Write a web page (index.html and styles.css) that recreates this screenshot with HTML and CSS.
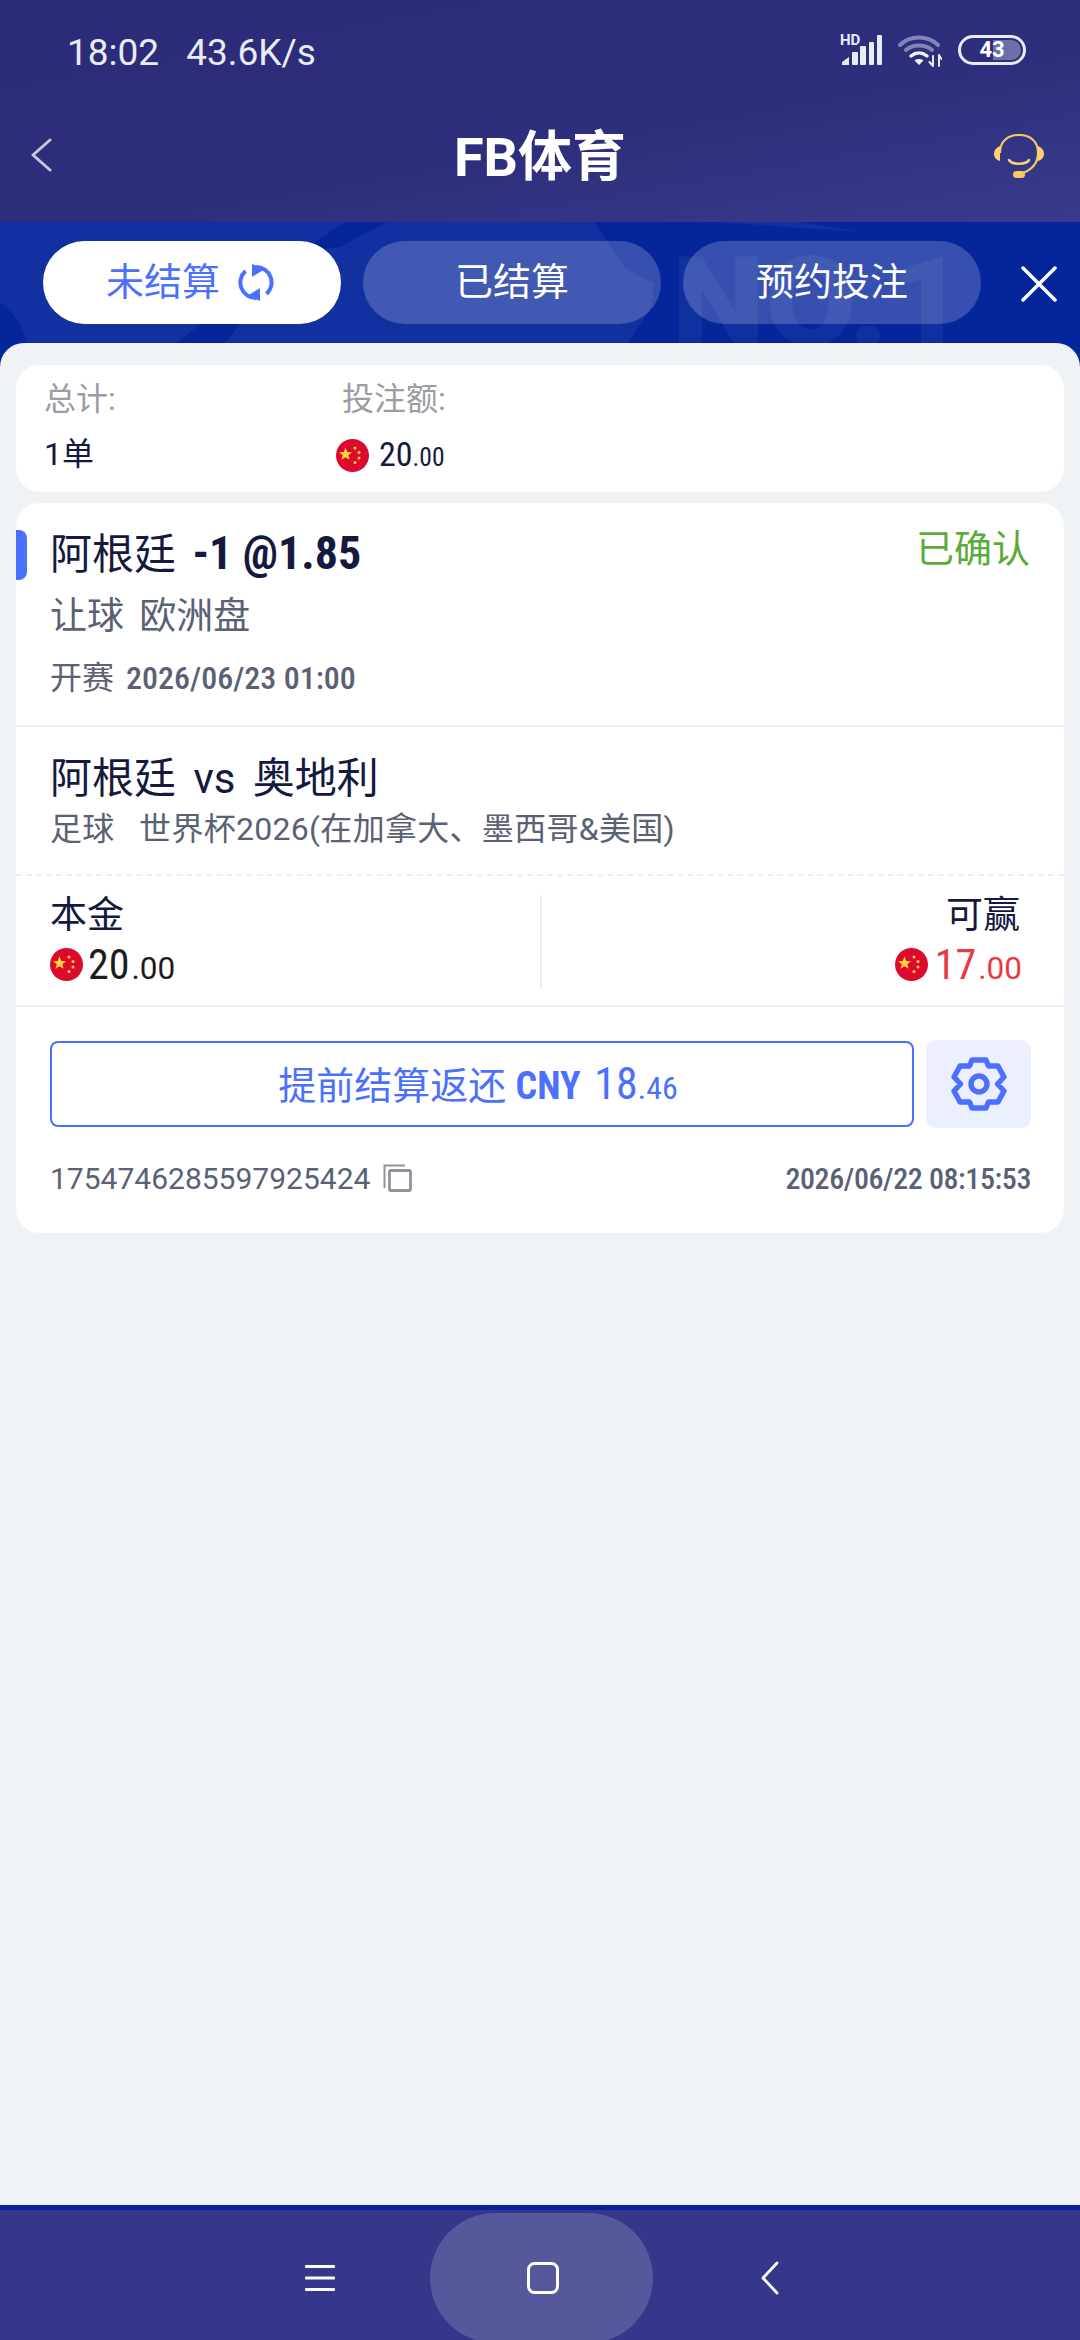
FILE: index.html

```html
<!DOCTYPE html>
<html lang="zh">
<head>
  <meta charset="UTF-8">
  <meta name="viewport" content="width=device-width, initial-scale=1.0"/>
  <title>FB体育</title>
  <link rel="stylesheet" href="styles.css">
</head>
<body>
  <svg class="defs" width="0" height="0">
    <symbol id="cn" viewBox="0 0 33 33">
      <circle cx="16.5" cy="16.5" r="16.5" fill="#dc0a2d"/>
      <polygon fill="#ffd23c" points="9.5,8.5 11.3,13 16,13.2 12.4,16.2 13.6,20.8 9.5,18.2 5.5,20.8 6.7,16.2 3,13.2 7.7,13"/>
      <circle cx="19" cy="9" r="1.5" fill="#ffd23c"/>
      <circle cx="23" cy="13.5" r="1.5" fill="#ffd23c"/>
      <circle cx="23" cy="19" r="1.5" fill="#ffd23c"/>
      <circle cx="19" cy="23.5" r="1.5" fill="#ffd23c"/>
    </symbol>
  </svg>

  <div class="screen">
    <div class="top">
      <div class="statusbar">
        <div class="status-left"><span>18:02</span><span>43.6K/s</span></div>
        <div class="status-right">
          <div class="signal">
            <span class="hd">HD</span>
            <svg width="40" height="30" viewBox="0 0 40 30" fill="#e9ebf3">
              <path d="M0 30v-3l7-5v8z"/>
              <rect x="10" y="17" width="6" height="13" rx="1"/>
              <rect x="18" y="11" width="6" height="19" rx="1"/>
              <rect x="27" y="7" width="5" height="23" rx="1"/>
              <rect x="35" y="0" width="5" height="30" rx="1"/>
            </svg>
          </div>
          <svg class="wifi" width="44" height="32" viewBox="0 0 44 32" fill="none" stroke-linecap="round">
            <path d="M2 10C12 0 30 0 40 10" stroke="#8184b5" stroke-width="4"/>
            <path d="M8 15C15 9 27 9 34 15" stroke="#8184b5" stroke-width="4"/>
            <path d="M13 21C18 17 24 17 29 21" stroke="#f1f2f8" stroke-width="3.5"/>
            <path d="M16.5 25.5L21 30l4.5-4.5C23 23.5 19 23.5 16.5 25.5z" fill="#f1f2f8"/>
            <path d="M35 21v10M35 31l-3.5-4M41 20v11M41 20l2.5 4" stroke="#e9ebf3" stroke-width="2"/>
          </svg>
          <div class="battery"><span class="battery-fill"></span><span class="battery-num">43</span></div>
        </div>
      </div>
      <div class="header">
        <svg class="back" width="22" height="34" viewBox="0 0 22 34" fill="none" stroke="#c8c9d8" stroke-width="3" stroke-linecap="round" stroke-linejoin="round"><path d="M20 2L3 17l17 15"/></svg>
        <h1>FB体育</h1>
        <svg class="headset" width="50" height="44" viewBox="0 0 50 44" fill="none">
          <path d="M6 19C6 7 14 1 25 1s19 6 19 18c0 9-5 16-15 20" stroke="#f5c766" stroke-width="2.2"/>
          <path d="M6 12v15C2 26 0 23 0 19.5S2 14 6 12zM44 12v15c4-1 6-4 6-7.5S48 14 44 12z" fill="#fcd273"/>
          <path d="M15 26c3 5 17 5 20 0" stroke="#fcd273" stroke-width="2.5" stroke-linecap="round"/>
          <rect x="19" y="37" width="12" height="7" rx="3.5" fill="#fcc660"/>
        </svg>
      </div>
    </div>

    <div class="tabs">
      <svg class="tabs-bg" width="1080" height="121" viewBox="0 0 1080 121">
        <path d="M0 0H595Q609 23 623 43Q635 55 654 60L651 86L628 121H0z" fill="#12309f"/>
        <path d="M300 30L345 0H387L340 25z" fill="#05259b"/>
        <path d="M177 121L215 90H250L225 121z" fill="#05259b"/>
        <path d="M0 80Q20 95 27 121H0z" fill="#05259b"/>
        <path d="M717 0L860 10L800 0z" fill="#12309f"/>
      </svg>
      <span class="tabs-mark">NO.1</span>
      <div class="tab tab-active">
        未结算
        <svg class="refresh" width="36" height="37" viewBox="0 0 36 37" fill="none" stroke="#4b70ff" stroke-width="4">
          <path d="M7.5 7A15.5 15.5 0 0 0 18 34"/>
          <path d="M28.5 30A15.5 15.5 0 0 0 18 3"/>
          <path d="M22 24V37L9 32zM14 13V0L27 5z" fill="#4b70ff" stroke="none"/>
        </svg>
      </div>
      <div class="tab">已结算</div>
      <div class="tab">预约投注</div>
      <svg class="close" width="36" height="36" viewBox="0 0 36 36" stroke="#fff" stroke-width="3.5" stroke-linecap="round"><path d="M2 2l32 32M34 2L2 34"/></svg>
    </div>

    <div class="sheet">
      <div class="summary">
        <div class="summary-col">
          <div class="summary-label">总计:</div>
          <div class="summary-value">1单</div>
        </div>
        <div class="summary-col">
          <div class="summary-label">投注额:</div>
          <div class="summary-value summary-money">
            <svg class="flag"><use href="#cn"/></svg>
            <span class="num n-34">20<small>.00</small></span>
          </div>
        </div>
      </div>

      <div class="bet">
        <div class="bet-head">
          <div class="bet-row">
            <div class="bet-title">阿根廷 <b class="num bet-odds">-1 @1.85</b></div>
            <div class="bet-state">已确认</div>
          </div>
          <div class="bet-type">让球 欧洲盘</div>
          <div class="bet-start">开赛 <span class="num">2026/06/23 01:00</span></div>
        </div>

        <div class="bet-match">
          <div class="match-name">阿根廷 vs 奥地利</div>
          <div class="match-league">足球&nbsp;&nbsp;世界杯2026(在加拿大、墨西哥&amp;美国)</div>
        </div>

        <div class="bet-amounts">
          <div class="amount">
            <div class="amount-label">本金</div>
            <div class="amount-value">
              <svg class="flag"><use href="#cn"/></svg>
              <span class="num n-big">20<small>.00</small></span>
            </div>
          </div>
          <div class="amount amount-win">
            <div class="amount-label">可赢</div>
            <div class="amount-value">
              <svg class="flag"><use href="#cn"/></svg>
              <span class="num n-big">17<small>.00</small></span>
            </div>
          </div>
        </div>

        <div class="bet-foot">
          <div class="actions">
            <div class="cashout">提前结算返还 <span class="num n-cash"><b>CNY</b> <em>18</em><small>.46</small></span></div>
            <div class="gear">
              <svg width="56" height="56" viewBox="-3 -3 56 56" fill="none" stroke="#4b70ff" stroke-width="5.4" stroke-linejoin="round">
                <path d="M18 1H32L34.5 7H44L50 18L43.5 25L50 32L44 43H34.5L32 49H18L15.5 43H6L0 32L6.5 25L0 18L6 7H15.5Z"/>
                <circle cx="25" cy="25" r="8"/>
              </svg>
            </div>
          </div>
          <div class="meta">
            <div class="order">1754746285597925424
              <svg width="30" height="28" viewBox="0 0 30 28" fill="none" stroke="#8f939c"><path d="M1.5 24V1.5H22" stroke-width="2"/><rect x="6.5" y="6.5" width="21" height="20" rx="1.5" stroke-width="2.8"/></svg>
            </div>
            <div class="num order-time">2026/06/22 08:15:53</div>
          </div>
        </div>
      </div>
    </div>

    <div class="navbar">
      <div class="nav-home"></div>
      <svg class="nav-menu" width="30" height="28" viewBox="0 0 30 28" fill="#fff"><rect y="1" width="30" height="3" rx="1"/><rect y="12.5" width="30" height="3" rx="1"/><rect y="24" width="30" height="3" rx="1"/></svg>
      <svg class="nav-square" width="32" height="32" viewBox="0 0 32 32" fill="none" stroke="#fff" stroke-width="3"><rect x="1.5" y="1.5" width="29" height="29" rx="6"/></svg>
      <svg class="nav-back" width="18" height="34" viewBox="0 0 18 34" fill="none" stroke="#fff" stroke-width="2.8" stroke-linecap="round" stroke-linejoin="round"><path d="M16 2L2 17l14 15"/></svg>
    </div>
  </div>
</body>
</html>
```

FILE: styles.css

```css
* { box-sizing: border-box; }
html, body { margin: 0; padding: 0; }
body { font-family: Roboto, "Noto Sans CJK SC", sans-serif; background: #eff3f6; color: #14193f; }
.defs { position: absolute; }
.screen { width: 1080px; height: 2340px; display: flex; flex-direction: column; overflow: hidden; }

.top { height: 222px; background: linear-gradient(170deg, #2b2a78 0%, #2e2f7c 60%, #383b8d 100%); color: #fff; }
.statusbar { height: 76px; padding: 29px 54px 0 67px; display: flex; justify-content: space-between; align-items: flex-start; }
.status-left { display: flex; gap: 27px; font-size: 37px; line-height: 48px; color: #e9ebf3; }
.status-right { display: flex; gap: 16px; margin-top: 6px; align-items: flex-start; }
.signal { position: relative; width: 40px; height: 30px; }
.hd { position: absolute; left: -2px; top: -2px; font-size: 15px; line-height: 14px; font-weight: 700; color: #e9ebf3; }
.battery { position: relative; width: 68px; height: 30px; border: 3px solid #e9ebf3; border-radius: 15px; text-align: center; }
.battery-fill { position: absolute; right: 2px; top: 2px; bottom: 2px; width: 28px; border-radius: 0 10px 10px 0; background: #6d6eaa; }
.battery-num { position: relative; font-size: 22px; line-height: 24px; font-weight: 700; display: block; }

.header { height: 146px; position: relative; display: flex; align-items: center; justify-content: center; padding-top: 17px; }
.header h1 { margin: 0; font-size: 54px; line-height: 64px; font-weight: 700; color: #fff; }
.back { position: absolute; left: 30px; top: 62px; }
.headset { position: absolute; right: 36px; top: 58px; }

.tabs { position: relative; height: 145px; background: #05259b; padding: 19px 0 24px 43px; margin-bottom: -24px; display: flex; gap: 22px; overflow: hidden; }
.tabs-bg { position: absolute; left: 0; top: 0; }
.tabs-mark { position: absolute; left: 672px; top: 16px; font-size: 125px; line-height: 130px; font-weight: 900; color: rgba(255,255,255,0.05); transform: scaleX(1.06); transform-origin: left; }
.tab { position: relative; width: 298px; height: 83px; border-radius: 42px; background: rgba(255,255,255,0.2); color: #fff; font-size: 38px; line-height: 83px; display: flex; align-items: center; justify-content: center; gap: 18px; }
.tab-active { background: #fff; color: #4b70ff; padding-right: 4px; }
.close { position: absolute; left: 1021px; top: 44px; }

.sheet { position: relative; flex: 1; background: #eff3f6; border-radius: 24px 24px 0 0; padding: 22px 16px 0; }
.summary { height: 127px; background: #fff; border-radius: 24px; padding: 14px 0 0 28px; display: flex; }
.summary-col { width: 298px; }
.summary-label { font-size: 32px; line-height: 40px; color: #9a9da3; }
.summary-value { font-size: 32px; line-height: 40px; margin-top: 15px; display: flex; align-items: center; gap: 10px; }
.summary-money { margin-left: -6px; }
.flag { width: 33px; height: 33px; flex: none; }

.num { font-family: "Roboto Condensed", "Liberation Sans Narrow", Roboto, sans-serif; }
.num small { font-size: 0.75em; }
.n-34 { font-size: 34px; }
.n-big { font-size: 42px; }
.n-big small { font-family: Roboto, sans-serif; padding-left: 2px; }

.bet { position: relative; margin-top: 11px; height: 730px; background: #fff; border-radius: 24px; }
.bet::before { content: ""; position: absolute; left: 0; top: 27px; width: 11px; height: 50px; background: #4b70ff; border-radius: 0 8px 8px 0; }
.bet-head { height: 224px; padding: 25px 34px 0; border-bottom: 2px solid #eceff6; }
.bet-row { display: flex; justify-content: space-between; align-items: flex-start; }
.bet-title { font-size: 42px; line-height: 50px; word-spacing: 6px; }
.bet-odds { font-weight: 700; font-size: 46px; word-spacing: 0; }
.bet-state { font-size: 38px; line-height: 36px; margin-top: 3px; color: #5aab3a; }
.bet-type { margin-top: 12px; font-size: 37px; line-height: 50px; word-spacing: 6px; color: #5a6175; }
.bet-start { margin-top: 11px; font-size: 32px; line-height: 50px; word-spacing: 4px; color: #5a6175; }
.bet-start .num { font-weight: 500; word-spacing: 0; }

.bet-match { height: 149px; padding: 27px 34px 0; border-bottom: 2px dashed #eceff6; }
.match-name { font-size: 42px; line-height: 50px; word-spacing: 7px; }
.match-league { margin-top: 3px; font-size: 32px; line-height: 44px; word-spacing: 4px; letter-spacing: 0.3px; color: #5a6175; }

.bet-amounts { height: 131px; padding: 19px 42px 15px 34px; border-bottom: 2px solid #eceff6; display: flex; }
.amount { width: 490px; }
.amount-label { font-size: 37px; line-height: 42px; }
.amount-value { margin-top: 4px; height: 46px; display: flex; align-items: center; gap: 5px; color: #1c1c1e; }
.amount-win { flex: 1; text-align: right; border-left: 2px solid #eceff6; }
.amount-win .amount-label { padding-right: 2px; }
.amount-win .amount-value { justify-content: flex-end; gap: 7px; color: #e83a46; }

.bet-foot { padding: 33px 33px 0 34px; }
.actions { display: flex; gap: 12px; height: 88px; }
.cashout { flex: 1; margin: 1px 0; padding-right: 8px; border: 2px solid #4b70ff; border-radius: 8px; color: #4b70ff; font-size: 38px; text-align: center; line-height: 82px; }
.n-cash { font-size: 38px; }
.n-cash b { font-weight: 700; }
.n-cash em { font-style: normal; font-size: 44px; padding-left: 5px; }
.n-cash small { font-size: 32px; }
.gear { width: 105px; background: #ebefff; border-radius: 10px; display: flex; align-items: center; justify-content: center; }
.meta { margin-top: 30px; height: 40px; display: flex; justify-content: space-between; align-items: center; color: #5a6175; font-size: 30px; }
.order { display: flex; align-items: center; gap: 13px; }
.order-time { font-weight: 500; font-size: 30px; letter-spacing: -0.4px; }

.navbar { position: relative; height: 135px; background: #35378b; border-top: 5px solid #08239a; }
.nav-home { position: absolute; left: 430px; top: 3px; width: 223px; height: 130px; border-radius: 65px; background: #55589a; }
.nav-menu { position: absolute; left: 305px; top: 54px; }
.nav-square { position: absolute; left: 527px; top: 52px; }
.nav-back { position: absolute; left: 761px; top: 51px; }
```
